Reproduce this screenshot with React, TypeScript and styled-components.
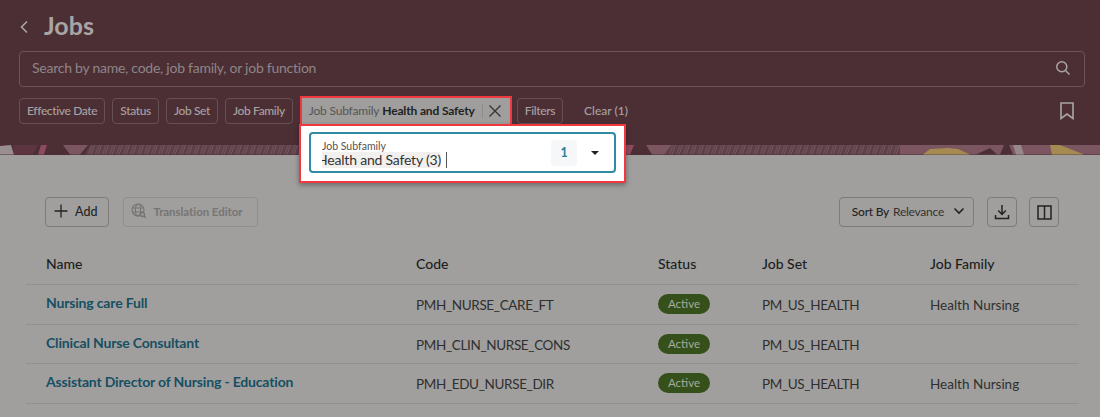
import React, { FunctionComponent } from 'react';
import styled, { createGlobalStyle } from 'styled-components';

const GlobalStyle = createGlobalStyle`
  html, body {
    margin: 0;
    padding: 0;
    background: #a09f9d;
  }
  body {
    font-family: Lato, "Noto Sans", "Liberation Sans", sans-serif;
  }
`;

const S = {
  Page: styled.div`
    position: relative;
    width: 1100px;
    height: 417px;
    overflow: hidden;
    background: #a09f9d;
  `,
  Header: styled.header`
    position: relative;
    height: 155px;
    background: #4c2f35;
    box-sizing: border-box;
    padding: 13px 15px 0 19px;
  `,
  Strip: styled.svg`
    position: absolute;
    left: 0;
    top: 145px;
    width: 1100px;
    height: 10px;
  `,
  TitleRow: styled.div`
    display: flex;
    align-items: center;
    height: 28px;
    gap: 15px;
  `,
  Title: styled.h1`
    margin: 0 0 4px;
    font-size: 25px;
    line-height: 28px;
    font-weight: 700;
    color: #a9a5a4;
  `,
  Search: styled.div`
    display: flex;
    align-items: center;
    justify-content: space-between;
    box-sizing: border-box;
    height: 36px;
    margin-top: 10px;
    padding: 0 13px 3px 12px;
    border: 1px solid #6c545a;
    border-radius: 4px;
    font-size: 14px;
    letter-spacing: -0.25px;
    color: #8f8587;
  `,
  FilterRow: styled.div`
    display: flex;
    align-items: center;
    margin-top: 11px;
    height: 26px;
  `,
  Chip: styled.div`
    display: flex;
    align-items: center;
    box-sizing: border-box;
    height: 26px;
    padding: 0 7px 2px;
    margin-right: 7px;
    border: 1px solid #665056;
    border-radius: 4px;
    font-size: 12px;
    letter-spacing: -0.36px;
    font-weight: 500;
    color: #a8a2a2;
    white-space: nowrap;
  `,
  ActiveChip: styled.div`
    display: flex;
    align-items: center;
    box-sizing: border-box;
    flex: 0 0 212px;
    height: 30px;
    margin-right: 5px;
    padding: 0 0 1px 7px;
    background: #9f9e9c;
    border: 2px solid #f0393f;
    font-size: 12px;
    letter-spacing: -0.2px;
    color: #555;
    white-space: nowrap;
  `,
  ChipName: styled.b`
    margin-left: 3px;
    font-weight: 700;
    letter-spacing: -0.15px;
    color: #222;
  `,
  ChipDivider: styled.span`
    flex: 0 0 1px;
    height: 14px;
    margin: 0 5px 0 7px;
    background: #8d8c8a;
  `,
  Clear: styled.span`
    margin: 0 0 2px 14px;
    font-size: 12px;
    font-weight: 500;
    color: #a8a2a2;
  `,
  Bookmark: styled.svg`
    margin-left: auto;
    margin-right: 11px;
  `,
  Popup: styled.div`
    position: absolute;
    left: 299px;
    top: 124px;
    box-sizing: border-box;
    width: 327px;
    height: 59px;
    padding: 6px 8px;
    background: #fff;
    border: 2px solid #f0393f;
    box-shadow: 0 2px 5px rgba(0, 0, 0, 0.35);
  `,
  Field: styled.div`
    display: flex;
    align-items: center;
    box-sizing: border-box;
    height: 41px;
    padding: 0 15px 0 11px;
    border: 2px solid #2f8aa5;
    border-radius: 4px;
  `,
  FieldText: styled.div`
    flex: 1;
    min-width: 0;
  `,
  FieldLabel: styled.div`
    margin-top: 2px;
    font-size: 10.5px;
    line-height: 12px;
    color: #55524f;
  `,
  FieldValue: styled.div`
    display: flex;
    align-items: center;
    height: 16px;
    font-size: 14px;
    letter-spacing: -0.2px;
    color: #333;
  `,
  ValueChip: styled.span`
    display: block;
    width: 119px;
    height: 16px;
    line-height: 16px;
    background: #f1f0ef;
    border-radius: 0 3px 3px 0;
    overflow: hidden;
    direction: rtl;
    white-space: nowrap;
  `,
  Caret: styled.span`
    width: 1px;
    height: 16px;
    margin-left: 5px;
    background: #555;
  `,
  Count: styled.div`
    display: flex;
    align-items: center;
    justify-content: center;
    width: 26px;
    height: 26px;
    margin-right: 14px;
    background: #f5f7f8;
    border-radius: 4px;
    font-size: 12.5px;
    font-weight: 700;
    color: #1f7f9c;
  `,
  Arrow: styled.span`
    width: 0;
    height: 0;
    border-left: 4px solid transparent;
    border-right: 4px solid transparent;
    border-top: 4px solid #222;
  `,
  Content: styled.main`
    padding: 42px 41px 0 26px;
  `,
  Toolbar: styled.div`
    display: flex;
    align-items: center;
    height: 30px;
    margin-left: 19px;
  `,
  Button: styled.div<{ $disabled?: boolean }>`
    display: flex;
    align-items: center;
    box-sizing: border-box;
    height: 30px;
    padding: 0 ${p => (p.$disabled ? 14 : 11)}px 2px 7px;
    gap: 6px;
    border: 1px solid ${p => (p.$disabled ? '#918f8d' : '#7d7c7a')};
    border-radius: 4px;
    font-size: ${p => (p.$disabled ? 11.5 : 12.5)}px;
    letter-spacing: ${p => (p.$disabled ? -0.05 : 0)}px;
    font-weight: ${p => (p.$disabled ? 700 : 500)};
    color: ${p => (p.$disabled ? '#767573' : '#232323')};
    white-space: nowrap;
  `,
  ToolbarGap: styled.div<{ $w: number }>`
    flex: 0 0 ${p => p.$w}px;
  `,
  Sort: styled.div`
    display: flex;
    align-items: center;
    box-sizing: border-box;
    height: 30px;
    padding: 0 8px 2px 12px;
    margin-left: auto;
    border: 1px solid #7d7c7a;
    border-radius: 4px;
    font-size: 12px;
    letter-spacing: -0.25px;
    color: #333;
    white-space: nowrap;
  `,
  SortLabel: styled.span`
    font-weight: 500;
    color: #232323;
    margin-right: 4px;
  `,
  IconButton: styled.div`
    display: flex;
    align-items: center;
    justify-content: center;
    box-sizing: border-box;
    width: 30px;
    height: 30px;
    border: 1px solid #7d7c7a;
    border-radius: 4px;
  `,
  Table: styled.div`
    margin-top: 18px;
    width: 1053px;
  `,
  Row: styled.div<{ $head?: boolean }>`
    display: grid;
    grid-template-columns: 370px 242px 104px 168px 1fr;
    align-items: center;
    box-sizing: border-box;
    height: ${p => (p.$head ? 40 : 39.5)}px;
    padding-left: 20px;
    border-bottom: 1px solid #919090;
    font-size: 13.5px;
    font-weight: ${p => (p.$head ? 500 : 400)};
    color: ${p => (p.$head ? '#1d1d1d' : '#2f2f2f')};
  `,
  HeadCell: styled.span`
    margin-bottom: 3px;
    font-size: 14px;
  `,
  NameLink: styled.span`
    margin-bottom: 3px;
    font-size: 14px;
    letter-spacing: -0.17px;
    font-weight: 700;
    color: #174f63;
  `,
  TextCell: styled.span`
    margin-top: 2px;
  `,
  CodeCell: styled.span`
    margin-top: 2px;
    letter-spacing: -0.35px;
  `,
  Badge: styled.span`
    display: inline-block;
    width: 52px;
    height: 20px;
    line-height: 20px;
    text-align: center;
    background: #36501b;
    border-radius: 10px;
    font-size: 11.5px;
    color: #a4ac9a;
  `,
};

// the decorative band along the bottom of the header
const patches = [
  { d: 'M0 9.5 L0 1 L11 0 L14 9.5 Z', fill: '#9a8e90' },
  { d: 'M14 9.5 L13 0 L38 0 L33 9.5 Z', fill: '#5c3540' },
  { d: 'M38 9.5 L41 0 L47 0 L44 9.5 Z', fill: '#8e4a5e' },
  { d: 'M63 0 L88 0 L80 9.5 L70 9.5 Z', fill: '#7b5660' },
  { d: 'M85 9.5 L90 0 L300 0 L300 9.5 Z', fill: 'url(#hatch)' },
  { d: 'M626 0 L634 0 L630 9.5 L622 9.5 Z', fill: '#8e4a5e' },
  { d: 'M646 0 L672 0 L664 9.5 L652 9.5 Z', fill: '#7b5660' },
  { d: 'M664 9.5 L672 0 L900 0 L900 9.5 Z', fill: 'url(#hatch)' },
  { d: 'M900 0 L1100 0 L1100 9.5 L900 9.5 Z', fill: '#7b5660' },
  { d: 'M923 9.5 L930 4 L948 3 L958 4 L970 9.5 Z', fill: '#a58b51' },
  { d: 'M976 9.5 L990 3 L997 9.5 Z', fill: '#4c2f35' },
  { d: 'M1000 9.5 L1004 0 L1009 0 L1013 9.5 Z', fill: '#4c2f35' },
  { d: 'M1013 0 L1021 0 L1024 9.5 L1016 9.5 Z', fill: '#97888b' },
  { d: 'M1050 0 L1060 0 L1084 9.5 L1052 9.5 Z', fill: '#a58b51' },
];

const ChevronLeft = () => (
  <svg width="10" height="14" viewBox="0 0 10 14" fill="none" stroke="#a9a5a4" strokeWidth="1.6">
    <path d="M8 1.5 L2.5 7 L8 12.5" />
  </svg>
);

const SearchIcon = () => (
  <svg width="16" height="16" viewBox="0 0 16 16" fill="none" stroke="#a9a5a4" strokeWidth="1.5">
    <circle cx="6.8" cy="6.8" r="5" />
    <path d="M10.5 10.5 L14.5 14.5" />
  </svg>
);

const CloseIcon = () => (
  <svg width="14" height="14" viewBox="0 0 14 14" fill="none" stroke="#333" strokeWidth="1.3" style={{ flex: '0 0 14px' }}>
    <path d="M1.5 1.5 L12.5 12.5 M12.5 1.5 L1.5 12.5" />
  </svg>
);

const PlusIcon = () => (
  <svg width="16" height="16" viewBox="0 0 16 16" fill="none" stroke="#232323" strokeWidth="1.3">
    <path d="M8 1.5 V14.5 M1.5 8 H14.5" />
  </svg>
);

const GlobeIcon = () => (
  <svg width="16" height="16" viewBox="0 0 16 16" fill="none" stroke="#767573" strokeWidth="1.1">
    <circle cx="7" cy="7" r="6" />
    <ellipse cx="7" cy="7" rx="2.6" ry="6" />
    <path d="M1 5 H13 M1 9 H13" />
    <circle cx="11.5" cy="11.5" r="2" fill="#a09f9d" strokeWidth="1.3" />
    <path d="M13 13 L15 15" strokeWidth="1.3" />
  </svg>
);

const ChevronDown = () => (
  <svg width="12" height="8" viewBox="0 0 12 8" fill="none" stroke="#232323" strokeWidth="1.6" style={{ marginLeft: 9 }}>
    <path d="M1.5 1.5 L6 6 L10.5 1.5" />
  </svg>
);

const DownloadIcon = () => (
  <svg width="16" height="16" viewBox="0 0 16 16" fill="none" stroke="#232323" strokeWidth="1.5">
    <path d="M8 1 V10 M4.2 6.5 L8 10.4 L11.8 6.5 M1.5 11 V14.5 H14.5 V11" />
  </svg>
);

const ColumnsIcon = () => (
  <svg width="15" height="15" viewBox="0 0 15 15" fill="none" stroke="#232323" strokeWidth="1.5">
    <path d="M1 1 H14 V14 H1 Z M7.5 1 V14" />
  </svg>
);

const rows = [
  { name: 'Nursing care Full', code: 'PMH_NURSE_CARE_FT', family: 'Health Nursing' },
  { name: 'Clinical Nurse Consultant', code: 'PMH_CLIN_NURSE_CONS', family: '' },
  { name: 'Assistant Director of Nursing - Education', code: 'PMH_EDU_NURSE_DIR', family: 'Health Nursing' },
];

const App: FunctionComponent = () => (
  <S.Page>
    <GlobalStyle />
    <S.Header>
      <S.Strip viewBox="0 0 1100 10" preserveAspectRatio="none">
        <defs>
          <pattern id="hatch" width="7" height="10" patternUnits="userSpaceOnUse" patternTransform="skewX(-20)">
            <rect width="7" height="10" fill="#5f3f47" />
            <path d="M1 0 V10 M3.5 0 V10" stroke="#775e65" strokeWidth="0.8" />
          </pattern>
        </defs>
        {patches.map(p => (
          <path key={p.d} d={p.d} fill={p.fill} />
        ))}
      </S.Strip>
      <S.TitleRow>
        <ChevronLeft />
        <S.Title>Jobs</S.Title>
      </S.TitleRow>
      <S.Search>
        <span>Search by name, code, job family, or job function</span>
        <SearchIcon />
      </S.Search>
      <S.FilterRow>
        <S.Chip>Effective Date</S.Chip>
        <S.Chip>Status</S.Chip>
        <S.Chip>Job Set</S.Chip>
        <S.Chip>Job Family</S.Chip>
        <S.ActiveChip>
          Job Subfamily<S.ChipName>Health and Safety</S.ChipName>
          <S.ChipDivider />
          <CloseIcon />
        </S.ActiveChip>
        <S.Chip>Filters</S.Chip>
        <S.Clear>Clear (1)</S.Clear>
        <S.Bookmark width="14" height="18" viewBox="0 0 14 18" fill="none" stroke="#a9a5a4" strokeWidth="1.6">
          <path d="M1 1 H13 V16.5 L7 12 L1 16.5 Z" />
        </S.Bookmark>
      </S.FilterRow>
    </S.Header>
    <S.Popup>
      <S.Field>
        <S.FieldText>
          <S.FieldLabel>Job Subfamily</S.FieldLabel>
          <S.FieldValue>
            <S.ValueChip><bdi>Health and Safety (3)</bdi></S.ValueChip>
            <S.Caret />
          </S.FieldValue>
        </S.FieldText>
        <S.Count>1</S.Count>
        <S.Arrow />
      </S.Field>
    </S.Popup>
    <S.Content>
      <S.Toolbar>
        <S.Button><PlusIcon />Add</S.Button>
        <S.ToolbarGap $w={14} />
        <S.Button $disabled><GlobeIcon />Translation Editor</S.Button>
        <S.Sort>
          <S.SortLabel>Sort By</S.SortLabel>Relevance
          <ChevronDown />
        </S.Sort>
        <S.ToolbarGap $w={13} />
        <S.IconButton><DownloadIcon /></S.IconButton>
        <S.ToolbarGap $w={12} />
        <S.IconButton><ColumnsIcon /></S.IconButton>
      </S.Toolbar>
      <S.Table>
        <S.Row $head>
          <S.HeadCell>Name</S.HeadCell>
          <S.HeadCell>Code</S.HeadCell>
          <S.HeadCell>Status</S.HeadCell>
          <S.HeadCell>Job Set</S.HeadCell>
          <S.HeadCell>Job Family</S.HeadCell>
        </S.Row>
        {rows.map(r => (
          <S.Row key={r.code}>
            <S.NameLink>{r.name}</S.NameLink>
            <S.CodeCell>{r.code}</S.CodeCell>
            <span><S.Badge>Active</S.Badge></span>
            <S.CodeCell>PM_US_HEALTH</S.CodeCell>
            <S.TextCell>{r.family}</S.TextCell>
          </S.Row>
        ))}
      </S.Table>
    </S.Content>
  </S.Page>
);

export default App;
